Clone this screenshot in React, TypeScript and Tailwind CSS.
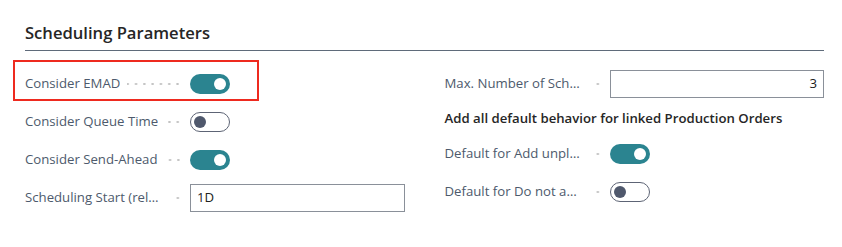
import React from 'react'

const font = { fontFamily: '"Segoe UI", "Open Sans", "Noto Sans", sans-serif' }

const Dots: React.FC = () => (
    <span className="flex-1 min-w-[10px] h-[4px] ml-[7px] bg-[radial-gradient(circle,#c2c2c2_0.9px,transparent_1.4px)] bg-[length:8.3px_4px] bg-repeat-x bg-right" />
)

const Toggle: React.FC<{ on?: boolean }> = ({ on }) =>
    on ? (
        <div className="w-[40px] h-[20px] rounded-full bg-[#2b8490] flex items-center justify-end pr-[4px]">
            <div className="w-[12px] h-[12px] rounded-full bg-white" />
        </div>
    ) : (
        <div className="w-[40px] h-[20px] rounded-full border border-[#5d6475] bg-white flex items-center pl-[3px]">
            <div className="w-[12px] h-[12px] rounded-full bg-[#4f586c]" />
        </div>
    )

const Field: React.FC<{ label: string; children: React.ReactNode }> = ({ label, children }) => (
    <div className="flex items-center h-[38px]">
        <div className="flex items-center w-[157px] shrink-0 min-w-0">
            <span className="truncate text-[13.2px] text-[#4d5a6c]">{label}</span>
            <Dots />
        </div>
        <div className="ml-[8px] flex-1 flex items-center">{children}</div>
    </div>
)

const TextBox: React.FC<{ value: string; right?: boolean }> = ({ value, right }) => (
    <div className={`w-full h-[28px] border border-[#8a9099] bg-white px-[6px] flex items-center text-[13.2px] text-[#212121] ${right ? 'justify-end' : ''}`}>
        {value}
    </div>
)

const App: React.FC = () => {
    return (
        <div className="w-[842px] h-[247px] bg-white pt-[22px] pl-[25px] pr-[18px]" style={font}>
            <h2 className="text-[16.6px] font-semibold text-[#262626] leading-[22px] pb-[6px] border-b border-[#5f6b7a]">
                Scheduling Parameters
            </h2>
            <div className="grid grid-cols-2 gap-x-[40px] mt-[14px]">
                <div className="relative">
                    <div className="absolute left-[-12px] top-[-5px] w-[246px] h-[41px] border-2 border-[#ee2a1f]" />
                    <Field label="Consider EMAD"><Toggle on /></Field>
                    <Field label="Consider Queue Time"><Toggle /></Field>
                    <Field label="Consider Send-Ahead"><Toggle on /></Field>
                    <Field label="Scheduling Start (relative to today)"><TextBox value="1D" /></Field>
                </div>
                <div>
                    <Field label="Max. Number of Scheduling Attempts"><TextBox value="3" right /></Field>
                    <div className="h-[32px] flex items-center text-[13.2px] font-semibold text-[#262626]">
                        Add all default behavior for linked Production Orders
                    </div>
                    <Field label="Default for Add unplanned Operations"><Toggle on /></Field>
                    <Field label="Default for Do not add Operations"><Toggle /></Field>
                </div>
            </div>
        </div>
    )
}

export default App
